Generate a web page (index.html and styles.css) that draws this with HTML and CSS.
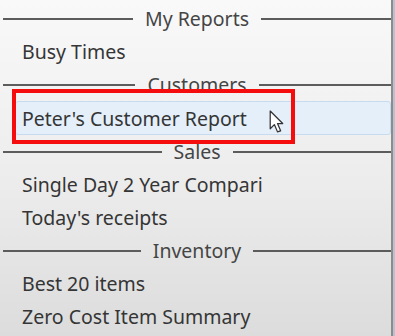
FILE: index.html
```html
<!DOCTYPE html>
<html>
<head>
  <link rel="stylesheet" href="styles.css">
</head>
<body>
  <div class="menu">
    <div class="group"><span>My Reports</span></div>
    <div class="item">Busy Times</div>
    <div class="group"><span>Customers</span></div>
    <div class="item selected">Peter's Customer Report</div>
    <div class="group"><span>Sales</span></div>
    <div class="item">Single Day 2 Year Compari</div>
    <div class="item">Today's receipts</div>
    <div class="group"><span>Inventory</span></div>
    <div class="item">Best 20 items</div>
    <div class="item">Zero Cost Item Summary</div>

    <div class="marker"></div>
    <svg class="cursor" width="17" height="25" viewBox="0 0 16 24">
      <path d="M1 1 L1 18 L5 14 L8 21 L11 20 L8 13 L13 13 Z" fill="#fff" stroke="#333" stroke-width="1.2" stroke-linejoin="round"/>
    </svg>
  </div>
</body>
</html>
```

FILE: styles.css
```css
* {
  margin: 0;
  padding: 0;
  box-sizing: border-box;
}
body {
  width: 395px;
  height: 336px;
  overflow: hidden;
  background: #b9c3cf;
  font-family: "Noto Sans", "Open Sans", sans-serif;
  font-size: 19.5px;
  color: #353535;
}
.menu {
  position: relative;
  width: 393px;
  height: 336px;
  padding: 2px 0 0 3px;
  border-right: 2px solid #8c8c8c;
  background: linear-gradient(to bottom, #f9f9f9 0%, #ececec 55%, #dcdcdc 100%);
}
.group {
  height: 33px;
  display: flex;
  align-items: center;
  gap: 12px;
  color: #454545;
}
.group::before,
.group::after {
  content: "";
  flex: 1;
  height: 2px;
  background: #5c5c5c;
}
.item {
  height: 33px;
  display: flex;
  align-items: center;
  padding-left: 19px;
  white-space: nowrap;
}
.selected {
  height: 34px;
  margin-left: 12px;
  padding-left: 6px;
  background: #e4effa;
  border: 1px solid #c6dbef;
  border-radius: 3px;
}
.marker {
  position: absolute;
  left: 12px;
  top: 89px;
  width: 283px;
  height: 55px;
  border: 4px solid #f50d0d;
}
.cursor {
  position: absolute;
  left: 269px;
  top: 110px;
}
```
